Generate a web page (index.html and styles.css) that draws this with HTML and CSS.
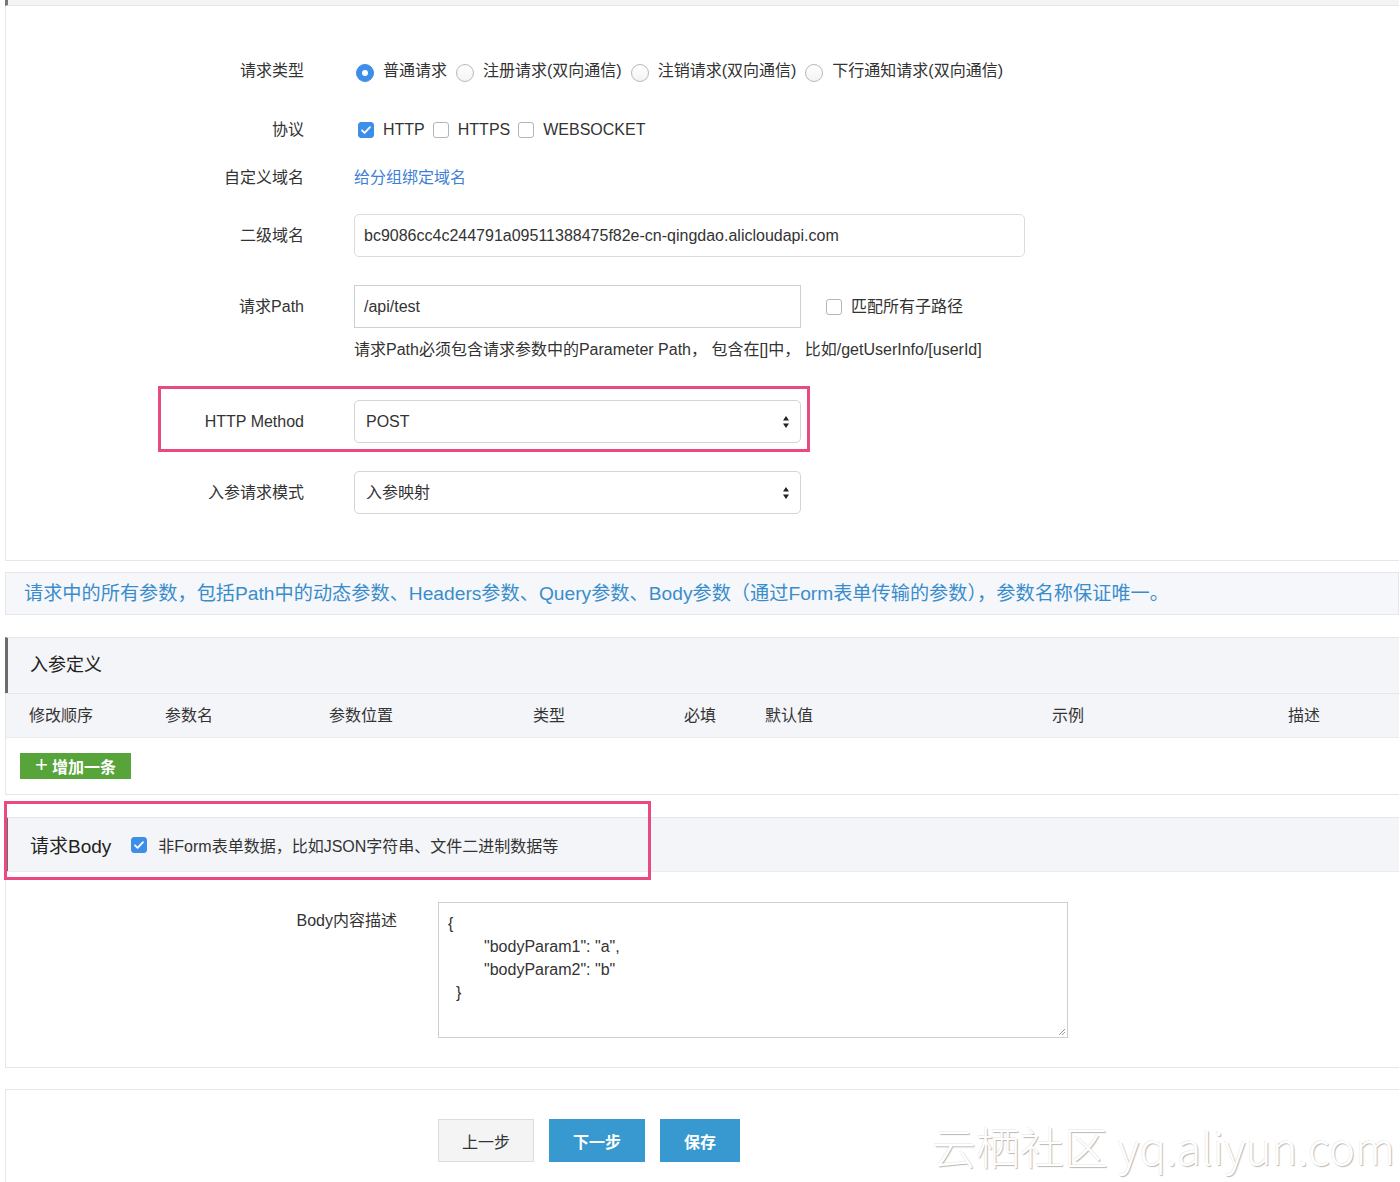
FILE: index.html
```html
<!DOCTYPE html>
<html lang="zh-CN">
<head>
<meta charset="utf-8">
<title>API 定义</title>
<link rel="stylesheet" href="styles.css">
</head>
<body>
<div class="page">
  <div class="topstrip"></div>

  <section class="panel basic">
    <div class="row r1">
      <div class="label">请求类型</div>
      <div class="ctrl opts">
        <span class="radio on"></span><span class="opt">普通请求</span>
        <span class="radio"></span><span class="opt">注册请求(双向通信)</span>
        <span class="radio"></span><span class="opt">注销请求(双向通信)</span>
        <span class="radio"></span><span class="opt">下行通知请求(双向通信)</span>
      </div>
    </div>
    <div class="row r2">
      <div class="label">协议</div>
      <div class="ctrl opts">
        <span class="check on"><svg viewBox="0 0 16 16" width="16" height="16"><path d="M4 8.3l2.6 2.6L12 5.2" fill="none" stroke="#fff" stroke-width="1.8" stroke-linecap="round" stroke-linejoin="round"/></svg></span><span class="opt">HTTP</span>
        <span class="check"></span><span class="opt">HTTPS</span>
        <span class="check"></span><span class="opt">WEBSOCKET</span>
      </div>
    </div>
    <div class="row r3">
      <div class="label">自定义域名</div>
      <div class="ctrl"><a class="link">给分组绑定域名</a></div>
    </div>
    <div class="row r4">
      <div class="label">二级域名</div>
      <div class="ctrl"><div class="input domain">bc9086cc4c244791a09511388475f82e-cn-qingdao.alicloudapi.com</div></div>
    </div>
    <div class="row r5">
      <div class="label">请求Path</div>
      <div class="ctrl pathctrl">
        <div class="input path">/api/test</div>
        <span class="check"></span><span class="opt">匹配所有子路径</span>
      </div>
    </div>
    <div class="help">请求Path必须包含请求参数中的Parameter Path，&nbsp;包含在[]中，&nbsp;比如/getUserInfo/[userId]</div>
    <div class="row r6">
      <div class="highlight hl-method"></div>
      <div class="label">HTTP Method</div>
      <div class="ctrl"><div class="select">POST<svg class="arrows" viewBox="0 0 8 14" width="8" height="14"><path d="M4 1L7 5.5H1z M4 13L7 8.5H1z" fill="#222"/></svg></div></div>
    </div>
    <div class="row r7">
      <div class="label">入参请求模式</div>
      <div class="ctrl"><div class="select">入参映射<svg class="arrows" viewBox="0 0 8 14" width="8" height="14"><path d="M4 1L7 5.5H1z M4 13L7 8.5H1z" fill="#222"/></svg></div></div>
    </div>
  </section>

  <div class="info">请求中的所有参数，包括Path中的动态参数、Headers参数、Query参数、Body参数（通过Form表单传输的参数），参数名称保证唯一。</div>

  <section class="panel params">
    <div class="phead">入参定义</div>
    <div class="thead">
      <span>修改顺序</span><span>参数名</span><span>参数位置</span><span>类型</span><span>必填</span><span>默认值</span><span>示例</span><span>描述</span>
    </div>
    <div class="tbody">
      <button class="addbtn"><span class="plus">+</span>增加一条</button>
    </div>
  </section>

  <section class="panel body">
    <div class="highlight hl-body"></div>
    <div class="phead bodyhead">
      <span class="btitle">请求Body</span>
      <span class="check on"><svg viewBox="0 0 16 16" width="16" height="16"><path d="M4 8.3l2.6 2.6L12 5.2" fill="none" stroke="#fff" stroke-width="1.8" stroke-linecap="round" stroke-linejoin="round"/></svg></span>
      <span class="opt">非Form表单数据，比如JSON字符串、文件二进制数据等</span>
    </div>
    <div class="bodyrow">
      <div class="blabel">Body内容描述</div>
      <div class="textarea">
        <div class="l0">{</div>
        <div class="l1">"bodyParam1": "a",</div>
        <div class="l1">"bodyParam2": "b"</div>
        <div class="l2">}</div>
        <svg class="grip" viewBox="0 0 10 10" width="10" height="10"><path d="M9 3L3 9 M9 6L6 9" stroke="#999" stroke-width="1"/></svg>
      </div>
    </div>
  </section>

  <section class="panel actions">
    <div class="btns">
      <button class="btn prev">上一步</button>
      <button class="btn primary">下一步</button>
      <button class="btn primary save">保存</button>
    </div>
    <div class="watermark">云栖社区 yq.aliyun.com</div>
  </section>
</div>
</body>
</html>
```

FILE: styles.css
```css
* { box-sizing: border-box; }
html, body { margin: 0; padding: 0; background: #fff; }
body {
  font-family: "Liberation Sans", "Noto Sans CJK SC", sans-serif;
  color: #333;
  font-size: 16px;
  overflow: hidden;
  height: 1182px;
}
.page { margin-left: 5px; width: 1394px; }

.topstrip {
  height: 6px;
  background: #f3f4f6;
  border-left: 3px solid #777;
  border-bottom: 1px solid #e4e6e9;
}

.panel {
  border-left: 1px solid #e4e6e9;
  border-bottom: 1px solid #e4e6e9;
  position: relative;
}

/* ---------- basic form ---------- */
.basic { padding: 53px 0 46px; }
.row {
  display: grid;
  grid-template-columns: 298px 1fr;
  column-gap: 50px;
  align-items: center;
  position: relative;
}
.label { text-align: right; font-size: 16px; line-height: 24px; color: #333; }
.ctrl { display: flex; align-items: center; line-height: 24px; }
.r2 { margin-top: 35px; }
.r3 { margin-top: 24px; }
.r4 { margin-top: 24px; }
.r5 { margin-top: 28px; }
.r6 { margin-top: 38px; }
.r7 { margin-top: 28px; }

.opts { font-size: 16px; }
.opt { margin-left: 9px; margin-right: 8px; color: #333; font-size: 16px; }
.r1 .opt { margin-right: 9px; }

.radio {
  width: 18px; height: 18px;
  border-radius: 50%;
  border: 1px solid #b8b8b8;
  background: linear-gradient(#fff, #f3f3f3);
  display: inline-block;
  flex: none;
  position: relative;
  top: 2px;
}
.r1 .radio:first-child { margin-left: 2px; }
.radio.on { background: #3d8ee8; border-color: #3d8ee8; }
.radio.on::after {
  content: "";
  position: absolute;
  left: 5px; top: 5px;
  width: 6px; height: 6px;
  border-radius: 50%;
  background: #fff;
}
.check {
  width: 16px; height: 16px;
  border: 1px solid #b5b5b5;
  border-radius: 3px;
  background: #fff;
  display: inline-block;
  flex: none;
}
.check.on { background: #3d8ee8; border-color: #3d8ee8; }
.check svg { display: block; margin: -1px; }
.r2 .check:first-child { margin-left: 4px; }

.link { color: #3f7fd6; font-size: 16px; text-decoration: none; }

.input {
  height: 43px;
  border: 1px solid #d4d4d4;
  font-size: 16px;
  line-height: 41px;
  padding: 0 9px;
  color: #333;
  background: #fff;
}
.input.domain { width: 671px; border-radius: 5px; border-color: #dcdcdc; }
.input.path { width: 447px; border-color: #cfcfcf; }
.pathctrl .check { margin-left: 25px; }

.help {
  margin: 10px 0 0 348px;
  font-size: 16px;
  line-height: 24px;
  color: #333;
}

.select {
  width: 447px;
  height: 43px;
  border: 1px solid #d4d4d4;
  border-radius: 5px;
  background: #fff;
  font-size: 16px;
  line-height: 41px;
  padding: 0 11px;
  display: flex;
  justify-content: space-between;
  align-items: center;
}
.select .arrows { margin-right: -1px; }

.highlight {
  position: absolute;
  border: 3px solid #e94a80;
  pointer-events: none;
  z-index: 2;
}
.hl-method { left: 152px; top: -14px; width: 652px; height: 66px; }
.hl-body { left: -2px; top: -16px; width: 647px; height: 79px; }

/* ---------- info ---------- */
.info {
  margin-top: 11px;
  height: 43px;
  border: 1px solid #e3e6ea;
  background: #f5f7fa;
  color: #3a8dcc;
  font-size: 19.2px;
  line-height: 41px;
  padding-left: 18px;
  white-space: nowrap;
}

/* ---------- params ---------- */
.params { margin-top: 22px; }
.phead {
  height: 56px;
  background: #f4f5f8;
  border-top: 1px solid #e4e6e9;
  border-left: 3px solid #6b6b6b;
  margin-left: -1px;
  padding-left: 22px;
  font-size: 18px;
  line-height: 54px;
  color: #222;
}
.thead {
  height: 45px;
  background: #f4f5f8;
  border-top: 1px solid #e4e6e9;
  border-bottom: 1px solid #e9ebee;
  display: grid;
  grid-template-columns: 136px 164px 204px 151px 81px 287px 236px 1fr;
  padding-left: 23px;
  align-items: center;
  font-size: 16px;
  color: #333;
  line-height: 40px;
}
.tbody { height: 56px; padding: 15px 0 0 14px; }
.addbtn {
  width: 111px; height: 26px;
  border: none;
  background: #57a43a;
  color: #fff;
  font-family: inherit;
  font-size: 16px;
  font-weight: bold;
  padding: 0;
  display: flex; align-items: center; justify-content: center;
}
.addbtn .plus { font-size: 22px; font-weight: normal; margin-right: 4px; line-height: 22px; position: relative; top: -1px; }

/* ---------- body ---------- */
.body { margin-top: 22px; }
.bodyhead {
  height: 55px;
  display: flex;
  align-items: center;
  line-height: normal;
  border-bottom: 1px solid #e9ebee;
}
.btitle { font-size: 19px; color: #222; margin-right: 20px; }
.bodyhead .opt { margin-left: 11px; }
.bodyrow {
  display: flex;
  padding: 30px 0 29px 0;
}
.blabel {
  width: 391px;
  text-align: right;
  font-size: 16px;
  line-height: 24px;
  padding-top: 7px;
  color: #333;
}
.textarea {
  margin-left: 41px;
  width: 630px;
  height: 136px;
  border: 1px solid #cfcfcf;
  font-size: 16px;
  line-height: 23px;
  padding: 9px 0 0 9px;
  position: relative;
  color: #333;
}
.l1 { padding-left: 36px; }
.l2 { padding-left: 8px; }
.grip { position: absolute; right: 1px; bottom: 1px; }

/* ---------- actions ---------- */
.actions { margin-top: 21px; border-top: 1px solid #e4e6e9; border-bottom: none; height: 100px; }
.btns { display: flex; padding: 29px 0 0 432px; }
.btn {
  height: 43px;
  border: 1px solid #ddd;
  font-family: inherit;
  font-size: 16px;
  padding: 0;
  margin-right: 15px;
}
.prev { width: 96px; background: #f4f4f4; color: #333; margin-right: 15px; }
.primary { width: 96px; background: #3799cf; border-color: #3799cf; color: #fff; font-weight: bold; }
.save { width: 80px; }

.watermark {
  position: absolute;
  right: 4px;
  top: 24px;
  font-family: "Noto Sans CJK SC", "Liberation Sans", sans-serif;
  font-weight: 300;
  font-size: 44px;
  color: #fff;
  text-shadow: 1px 1px 1px rgba(0,0,0,.28), -1px -1px 0 rgba(0,0,0,.06);
  white-space: nowrap;
}
```
